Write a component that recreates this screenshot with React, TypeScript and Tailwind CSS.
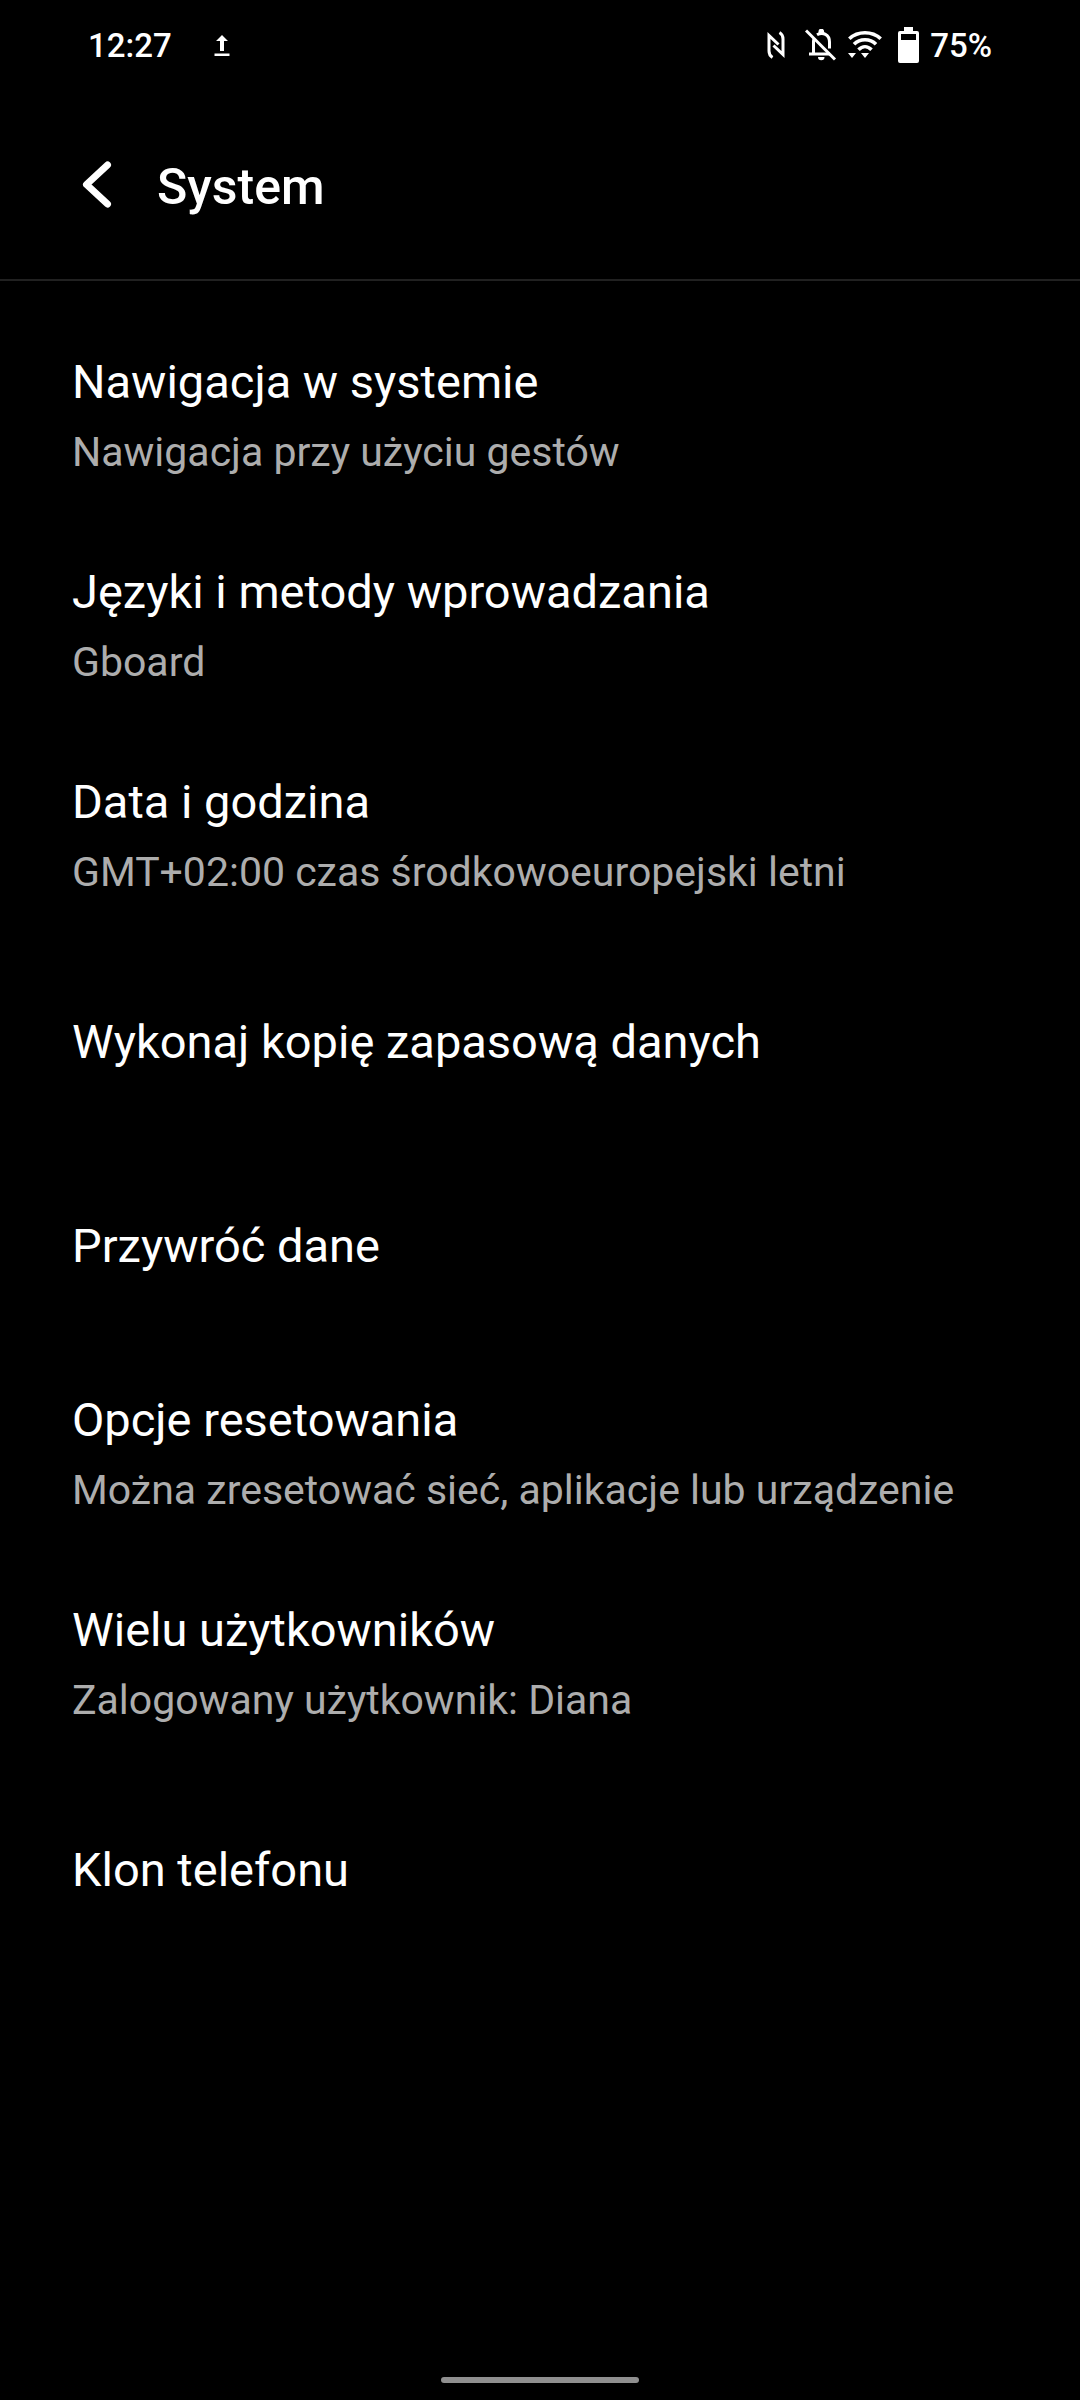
type SettingItem = { title: string; summary?: string };

const ITEMS: SettingItem[] = [
  { title: 'Nawigacja w systemie', summary: 'Nawigacja przy użyciu gestów' },
  { title: 'Języki i metody wprowadzania', summary: 'Gboard' },
  { title: 'Data i godzina', summary: 'GMT+02:00 czas środkowoeuropejski letni' },
  { title: 'Wykonaj kopię zapasową danych' },
  { title: 'Przywróć dane' },
  { title: 'Opcje resetowania', summary: 'Można zresetować sieć, aplikacje lub urządzenie' },
  { title: 'Wielu użytkowników', summary: 'Zalogowany użytkownik: Diana' },
  { title: 'Klon telefonu' },
];

function UploadIcon() {
  return (
    <svg className="h-[22px] w-[16px]" viewBox="0 0 16 22" fill="currentColor" aria-hidden="true">
      <path d="M8 0l6 6h-4v10H6V6H2z" />
      <path d="M0.5 18.500h15v2.500h-15z" />
    </svg>
  );
}

function NfcIcon() {
  return (
    <svg className="mb-0.5 h-[28px] w-[18px]" viewBox="0 0 18 28" fill="none" stroke="currentColor" strokeWidth="3" aria-hidden="true">
      <path d="M5.500 26.500C3 25 2 23 2 20V4.500l9.500 9" />
      <path d="M12.500 1.500C15 3 16 5 16 8v15.500l-9.500-9" />
    </svg>
  );
}

function BellOffIcon() {
  return (
    <svg className="mb-0.5 h-[32px] w-[32px]" viewBox="0 0 32 32" fill="none" stroke="currentColor" strokeWidth="3" aria-hidden="true">
      <path d="M1 1.500l29 29" />
      <path d="M4 25h21M8.500 25V13c0-1.500.3-2.700.8-3.800M12 5.800c5.800-3.400 12.500-.2 12.500 7.200v6.500" />
      <path d="M13.500 5V2.500a2.800 2.800 0 015.600 0V5zM13 28h6.500a3.200 3.200 0 01-6.500 0z" fill="currentColor" stroke="none" />
    </svg>
  );
}

function WifiIcon() {
  return (
    <svg className="mb-0.5 h-[28px] w-[34px]" viewBox="0 0 34 28" fill="none" stroke="currentColor" strokeWidth="3.600" aria-hidden="true">
      <path d="M1.300 7.800C10-.2 24-.2 32.700 7.800M6 13.300c6-6 16-6 22 0M10.500 18.700c4-4 9-4 13 0" />
      <path d="M0 22h8l-4 5zM13 22h8l-4 5z" fill="currentColor" stroke="none" />
    </svg>
  );
}

function BatteryIcon() {
  return (
    <svg className="mb-0.5 h-[36px] w-[21px]" viewBox="0 0 21 36" fill="currentColor" aria-hidden="true">
      <path fillRule="evenodd" d="M6 0h9v4h4a2 2 0 012 2v28a2 2 0 01-2 2H2a2 2 0 01-2-2V6a2 2 0 012-2h4zM3 7v6h15V7z" />
    </svg>
  );
}

function StatusBar() {
  return (
    <div className="flex h-[91px] items-center justify-between px-22 text-[33px] leading-10 font-medium">
      <div className="flex items-center gap-[42px]">
        <span>12:27</span>
        <UploadIcon />
      </div>
      <div className="flex items-center">
        <NfcIcon />
        <span className="ml-5 flex items-center gap-[11px]">
          <BellOffIcon />
          <WifiIcon />
        </span>
        <span className="ml-4 flex items-center gap-[11px]">
          <BatteryIcon />
          <span>75%</span>
        </span>
      </div>
    </div>
  );
}

function SettingRow({ title, summary }: SettingItem) {
  return (
    <li>
      <button
        type="button"
        className={`flex w-full flex-col gap-[18px] px-18 text-left ${summary ? 'py-11' : 'py-[74px]'}`}
      >
        <span className="text-[47px] leading-[56px]">{title}</span>
        {summary && <span className="text-[41px] leading-12 text-[#adadad]">{summary}</span>}
      </button>
    </li>
  );
}

export default function App() {
  return (
    <div className="flex min-h-screen flex-col bg-black font-['Roboto',sans-serif] text-white">
      <StatusBar />
      <header className="flex items-center gap-[45px] border-b-2 border-[#212121] px-20 pt-16 pb-15">
        <button type="button" aria-label="Wstecz">
          <svg className="h-[52px] w-[32px]" viewBox="0 0 32 52" fill="none" stroke="currentColor" strokeWidth="7" strokeLinecap="round" strokeLinejoin="round" aria-hidden="true">
            <path d="M27.500 4L6.500 23.500l21 19.500" />
          </svg>
        </button>
        <h1 className="text-[50px] leading-16 font-medium">System</h1>
      </header>
      <main className="grow pt-[29px]">
        <ul>
          {ITEMS.map((item) => (
            <SettingRow key={item.title} {...item} />
          ))}
        </ul>
      </main>
      <div className="mx-auto mb-[17px] h-1.5 w-[198px] rounded-full bg-[#8f8f8f]" />
    </div>
  );
}
